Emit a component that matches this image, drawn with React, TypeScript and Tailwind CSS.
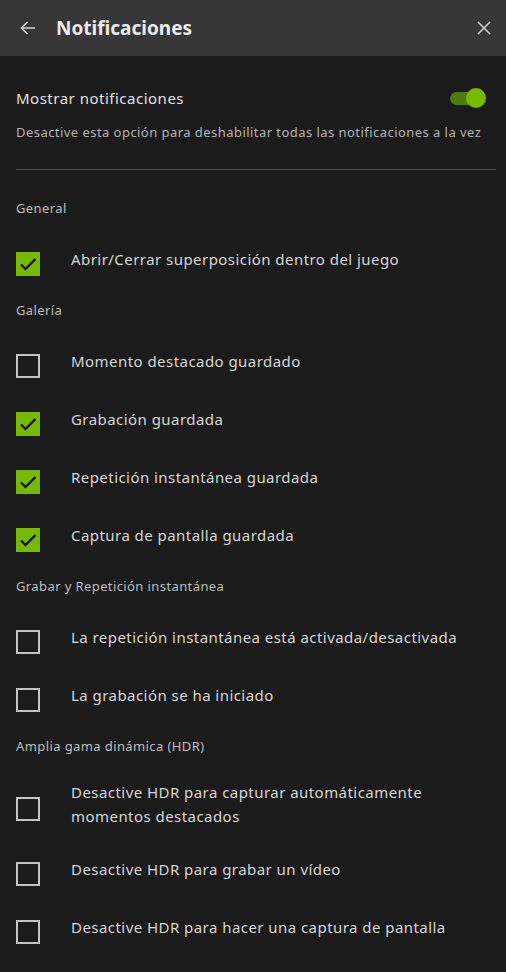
import { useState } from 'react';

type Item = { label: string; checked: boolean };
type Group = { title: string; items: Item[] };

const groups: Group[] = [
  {
    title: 'General',
    items: [{ label: 'Abrir/Cerrar superposición dentro del juego', checked: true }],
  },
  {
    title: 'Galería',
    items: [
      { label: 'Momento destacado guardado', checked: false },
      { label: 'Grabación guardada', checked: true },
      { label: 'Repetición instantánea guardada', checked: true },
      { label: 'Captura de pantalla guardada', checked: true },
    ],
  },
  {
    title: 'Grabar y Repetición instantánea',
    items: [
      { label: 'La repetición instantánea está activada/desactivada', checked: false },
      { label: 'La grabación se ha iniciado', checked: false },
    ],
  },
  {
    title: 'Amplia gama dinámica (HDR)',
    items: [
      { label: 'Desactive HDR para capturar automáticamente momentos destacados', checked: false },
      { label: 'Desactive HDR para grabar un vídeo', checked: false },
      { label: 'Desactive HDR para hacer una captura de pantalla', checked: false },
    ],
  },
];

function CheckRow({ label, checked }: Item) {
  const [on, setOn] = useState(checked);
  return (
    <div className="flex items-center py-3 cursor-pointer" onClick={() => setOn(!on)}>
      <div className="h-[34px] pt-[10px] shrink-0 self-center">
        {on ? (
          <div className="w-6 h-6 bg-[#76b900] flex items-center justify-center">
            <svg width="20" height="20" viewBox="0 0 20 20" fill="none" stroke="#0d0d0d" strokeWidth="2.2">
              <path d="M3 10.5l4.5 4.5L17.5 5" />
            </svg>
          </div>
        ) : (
          <div className="w-6 h-6 border-2 border-[#c4c4c4]" />
        )}
      </div>
      <div className="ml-[31px] pr-4 text-[15px] leading-6 tracking-[0.45px] text-[#d6d6d6]">{label}</div>
    </div>
  );
}

export default function App() {
  const [enabled, setEnabled] = useState(true);

  return (
    <div
      className="w-[506px] h-[972px] overflow-hidden bg-[#1b1b1b]"
      style={{ fontFamily: '"Noto Sans", sans-serif' }}
    >
      {/* Header */}
      <div className="h-14 bg-[#373737] flex items-center pl-5 pr-[15px]">
        <svg width="16" height="16" viewBox="0 0 16 16" fill="none" stroke="#cfcfcf" strokeWidth="1.6">
          <path d="M15 8H1.5M7.5 2L1.5 8l6 6" />
        </svg>
        <h1 className="ml-5 text-[19px] font-bold text-[#ebebeb]">Notificaciones</h1>
        <svg className="ml-auto" width="14" height="14" viewBox="0 0 14 14" fill="none" stroke="#d0d0d0" strokeWidth="1.6">
          <path d="M1 1l12 12M13 1L1 13" />
        </svg>
      </div>

      <div className="pl-4 pr-[10px]">
        <div className="pt-[30px] flex items-center">
          <span className="text-[15px] leading-6 tracking-[0.5px] text-[#e2e2e2]">Mostrar notificaciones</span>
          <button
            onClick={() => setEnabled(!enabled)}
            className="ml-auto mr-[10px] relative w-[36px] h-5 flex items-center"
          >
            <span className={`absolute left-0 w-8 h-[13px] rounded-full ${enabled ? 'bg-[#4e7a14]' : 'bg-[#555]'}`} />
            <span
              className={`absolute w-5 h-5 rounded-full ${enabled ? 'right-0 bg-[#76b900]' : 'left-0 bg-[#bbb]'}`}
            />
          </button>
        </div>
        <p className="mt-3 text-[13px] leading-5 tracking-[0.45px] text-[#b4b4b4]">
          Desactive esta opción para deshabilitar todas las notificaciones a la vez
        </p>
        <div className="mt-[27px] border-t border-[#4f4f4f]" />

        <div className="pt-4">
          {groups.map((g) => (
            <div key={g.title}>
              <div className="pt-3 pb-3 text-[13px] leading-5 tracking-[0.4px] text-[#bdbdbd]">{g.title}</div>
              {g.items.map((it) => (
                <CheckRow key={it.label} label={it.label} checked={it.checked} />
              ))}
            </div>
          ))}
        </div>
      </div>
    </div>
  );
}
